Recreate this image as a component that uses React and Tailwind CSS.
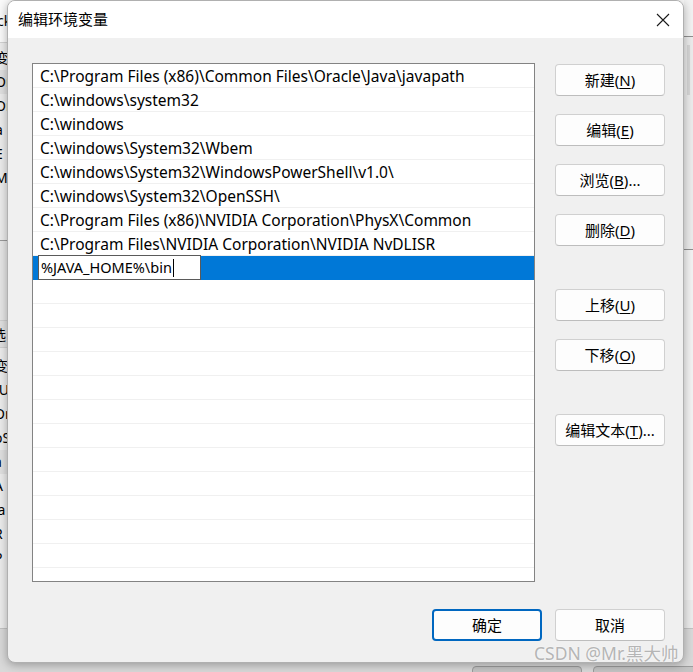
const font = { fontFamily: '"Noto Sans", "Noto Sans CJK SC", sans-serif' }

const paths = [
  'C:\\Program Files (x86)\\Common Files\\Oracle\\Java\\javapath',
  'C:\\windows\\system32',
  'C:\\windows',
  'C:\\windows\\System32\\Wbem',
  'C:\\windows\\System32\\WindowsPowerShell\\v1.0\\',
  'C:\\windows\\System32\\OpenSSH\\',
  'C:\\Program Files (x86)\\NVIDIA Corporation\\PhysX\\Common',
  'C:\\Program Files\\NVIDIA Corporation\\NVIDIA NvDLISR',
]

const sideButtons = [
  { label: '新建', key: 'N', mt: 'mt-0' },
  { label: '编辑', key: 'E', mt: 'mt-[18px]' },
  { label: '浏览', key: 'B', tail: '...', mt: 'mt-[18px]' },
  { label: '删除', key: 'D', mt: 'mt-[18px]' },
  { label: '上移', key: 'U', mt: 'mt-[43px]' },
  { label: '下移', key: 'O', mt: 'mt-[18px]' },
  { label: '编辑文本', key: 'T', tail: '...', mt: 'mt-[43px]' },
]

const bgTop = ['变', 'Or', 'Or', 'a', 'E', 'M']
const bgBottom = ['变', 'IU', 'Or', 'oS', 'a', 'A', 'la', 'R', 'P']

function WinButton({ label, k, tail, className = '' }) {
  return (
    <button
      className={`w-[110px] h-[32px] rounded-[4px] bg-[#fdfdfd] border border-[#d0d0d0] border-b-[#bdbdbd] text-[15px] text-black flex items-center justify-center ${className}`}
    >
      <span>
        {label}(<span className="underline underline-offset-2">{k}</span>){tail}
      </span>
    </button>
  )
}

export default function App() {
  return (
    <div className="relative w-[693px] h-[672px] overflow-hidden bg-[#b4b4b4]" style={font}>
      {/* background window peeking out */}
      <div className="absolute inset-0 bg-[#ececec]">
        <div className="h-[43px] bg-[#fafafa] border-b border-[#d2d2d2] text-[14px] pt-[10px] -ml-[3px]">ck</div>
        <div className="flex flex-col text-[14px] text-black -ml-[5px] pt-[3px]">
          {bgTop.map((t, i) => (
            <div key={i} className={`h-[24px] leading-[24px] ${i === 1 ? 'bg-[#e0e0e0]' : ''}`}>{t}</div>
          ))}
        </div>
        <div className="mt-[50px] h-[80px] border-t border-[#9a9a9a] bg-[#e6e6e6]" />
        <div className="h-[28px] leading-[28px] border-t border-b border-[#cfcfcf] bg-[#e0e0e0] text-[14px] -ml-[8px]">选</div>
        <div className="flex flex-col text-[14px] text-black -ml-[6px] pt-[6px]">
          {bgBottom.map((t, i) => (
            <div key={i} className={`h-[24px] leading-[24px] ${i === 4 ? 'bg-[#e0e0e0]' : ''}`}>{t}</div>
          ))}
        </div>
        <div className="absolute left-0 bottom-0 w-full h-[44px] bg-[#d9d9d9] border-t border-[#c2c2c2]" />
        <div className="absolute right-0 top-0 w-[9px] h-[600px] bg-[#f2f2f2]">
          <div className="mt-[36px] h-[214px] border-t border-b border-[#8f8f8f] bg-[#ebebeb] flex">
            <div className="ml-[3px] mt-[8px] w-[3px] h-[50px] bg-[#d6d6d6]" />
          </div>
        </div>
        <div className="absolute left-[472px] top-[666px] w-[110px] h-[20px] rounded-[4px] border border-[#9c9c9c] bg-[#c4c4c4]" />
        <div className="absolute left-[593px] top-[666px] w-[110px] h-[20px] rounded-[4px] border border-[#9c9c9c] bg-[#c4c4c4]" />
      </div>

      {/* dialog */}
      <div className="absolute left-[7px] top-0 w-[677px] h-[663px] rounded-[8px] overflow-hidden bg-[#f0f0f0] border border-[#b0b0b0] shadow-[0_2px_10px_rgba(0,0,0,0.3)] flex flex-col">
        <div className="h-[37px] bg-white flex items-center justify-between pl-[10px] pr-[13px] shrink-0">
          <span className="text-[15px] text-black">编辑环境变量</span>
          <svg width="14" height="14" viewBox="0 0 14 14" className="mt-[1px]">
            <path d="M1 1 L13 13 M13 1 L1 13" stroke="#1a1a1a" strokeWidth="1.1" />
          </svg>
        </div>

        <div className="flex-1 flex flex-col pl-[24px] pr-[18px] pt-[25px]">
          <div className="flex gap-[20px]">
            <div className="w-[504px] h-[519px] border border-[#838383] bg-white overflow-hidden text-[15.5px] text-black">
              {paths.map((p) => (
                <div key={p} className="h-[24px] border-b border-[#f0f0f0] pl-[7px] pt-[1px] leading-[23px] whitespace-nowrap">
                  {p}
                </div>
              ))}
              <div className="h-[24px] bg-[#0078d7] flex items-stretch">
                <div className="ml-[5px] w-[163px] h-[25px] -mt-[1px] bg-white border border-[#5a5a5a] flex items-center pl-[2px] leading-none whitespace-nowrap text-[14.5px]">
                  %JAVA_HOME%\bin
                  <span className="ml-[1px] w-[1px] h-[18px] bg-black" />
                </div>
              </div>
              {Array.from({ length: 13 }).map((_, i) => (
                <div key={i} className="h-[24px] border-b border-[#f0f0f0]" />
              ))}
            </div>

            <div className="flex flex-col pt-[1px]">
              {sideButtons.map((b) => (
                <WinButton key={b.key} label={b.label} k={b.key} tail={b.tail} className={b.mt} />
              ))}
            </div>
          </div>

          <div className="flex justify-end gap-[13px] mt-[27px]">
            <button className="w-[110px] h-[32px] rounded-[4px] bg-[#fdfdfd] border-2 border-[#0067c0] text-[15px] text-black">
              确定
            </button>
            <button className="w-[110px] h-[32px] rounded-[4px] bg-[#fdfdfd] border border-[#d0d0d0] border-b-[#bdbdbd] text-[15px] text-black">
              取消
            </button>
          </div>
        </div>
      </div>

      {/* watermark */}
      <div className="absolute left-[534px] top-[640px] text-[17.5px] text-[#b5b5b5] [text-shadow:0_0_2px_#ffffff]">
        CSDN @Mr.黑大帅
      </div>
    </div>
  )
}
